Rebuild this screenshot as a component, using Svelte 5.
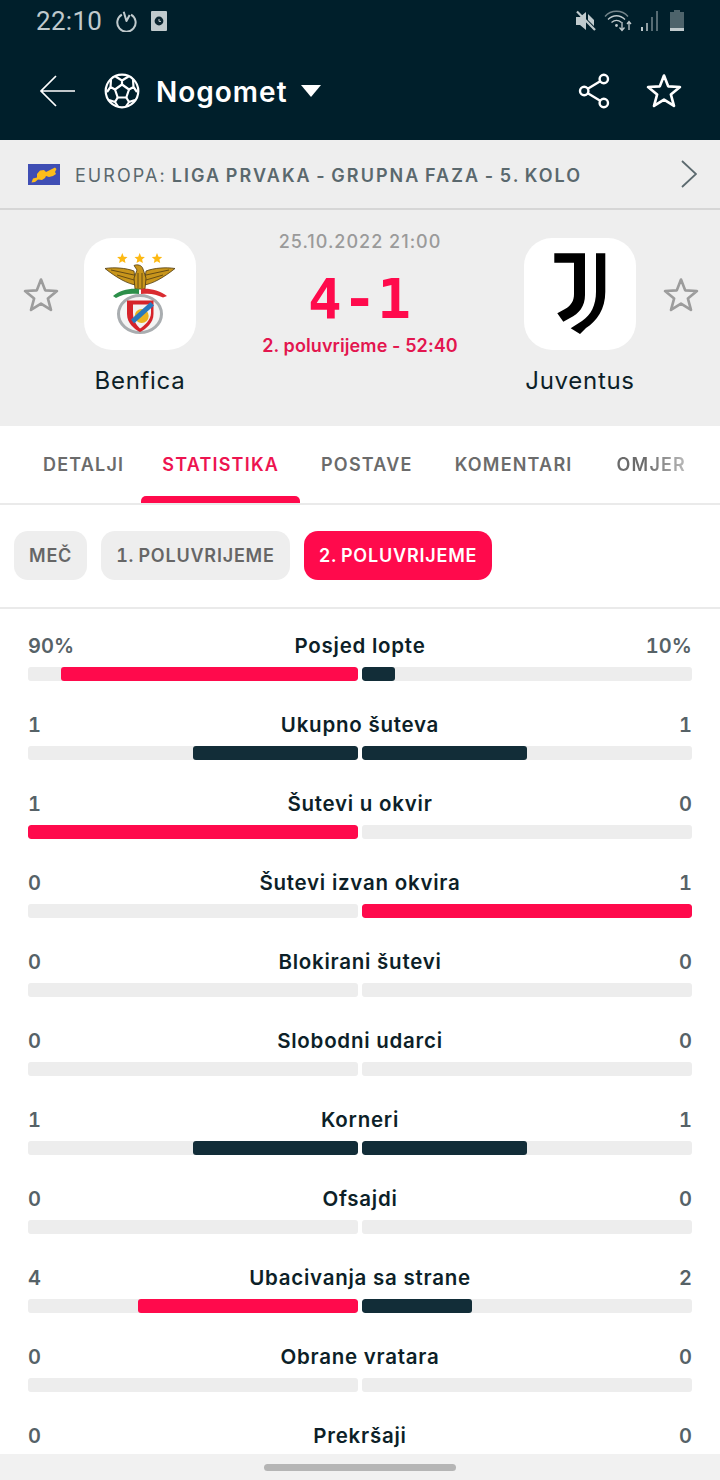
<script>
  const tabs = ['DETALJI', 'STATISTIKA', 'POSTAVE', 'KOMENTARI', 'OMJER'];
  const chips = ['MEČ', '1. POLUVRIJEME', '2. POLUVRIJEME'];
  const stats = [
    { name: 'Posjed lopte', l: 90, r: 10, suffix: '%' },
    { name: 'Ukupno šuteva', l: 1, r: 1 },
    { name: 'Šutevi u okvir', l: 1, r: 0 },
    { name: 'Šutevi izvan okvira', l: 0, r: 1 },
    { name: 'Blokirani šutevi', l: 0, r: 0 },
    { name: 'Slobodni udarci', l: 0, r: 0 },
    { name: 'Korneri', l: 1, r: 1 },
    { name: 'Ofsajdi', l: 0, r: 0 },
    { name: 'Ubacivanja sa strane', l: 4, r: 2 },
    { name: 'Obrane vratara', l: 0, r: 0 },
    { name: 'Prekršaji', l: 0, r: 0 }
  ];
  const pct = (v, o) => (v + o === 0 ? 0 : (v / (v + o)) * 100);
  const tone = (v, o) => (v > o ? 'hot' : 'cool');
  const starPath = 'M17.5 2.5 21.6 13 33 13.6 24.2 20.9 27.2 32 17.5 25.8 7.8 32 10.8 20.9 2 13.6 13.4 13Z';
  const miniStar = 'M0-5.4 1.5-1.8 5.2-1.5 2.4 1 3.2 4.6 0 2.700-3.2 4.6-2.4 1-5.2-1.5-1.500-1.8Z';
</script>

<div class="page">
  <header class="top">
    <div class="status">
      <div class="status-left">
        <span class="clock">22:10</span>
        <svg class="si" width="22" height="22" viewBox="0 0 24 24" fill="none" stroke="#c0cacd" stroke-width="2.200"><path d="M7.5 5a10 10 0 1 0 10 0"/><path d="M9.500 2 12.500 12 16 5.500" stroke-linejoin="round"/></svg>
        <svg class="si" width="18" height="22" viewBox="0 0 18 22"><rect x="1" y="1" width="16" height="20" rx="1" fill="#c0cacd"/><circle cx="9" cy="11" r="4.400" fill="#0b2530"/><path d="M9 9v2.400h2" stroke="#c0cacd" stroke-width="1" fill="none"/></svg>
      </div>
      <div class="status-right">
        <svg width="21" height="22" viewBox="0 0 21 22"><path d="M1 7h4l6-5v7.500ZM1 7v8h4l6 5V9.500Z" fill="#c0cacd"/><path d="M2 1.500 20 20" stroke="#c0cacd" stroke-width="2.200"/><path d="M13 4 19 10v6l-6-6Z" fill="#c0cacd"/></svg>
        <svg width="28" height="22" viewBox="0 0 28 22" fill="none" stroke="#8f9da2" stroke-width="1.300"><path d="M1 6.500C7-.5 18-.5 24 6.500" stroke="#74858b"/><path d="M4 9.500C9 4.500 16 4.500 21 9.500" stroke="#c0cacd"/><path d="M7.500 12.500c3-2.500 7-2.500 10 0" stroke="#c0cacd"/><circle cx="12.500" cy="15.500" r="1.400" fill="#c0cacd" stroke="none"/><path d="M18 12v8M15.500 17.500 18 20.500l2.500-3" stroke="#c0cacd"/><path d="M25 20v-8M23 14l2-2.500 2 2.500" stroke="#c0cacd"/></svg>
        <svg width="19" height="22" viewBox="0 0 19 22"><rect x="1" y="17" width="2" height="4" fill="#c0cacd"/><rect x="6" y="13" width="2" height="8" fill="#8f9da2"/><rect x="11" y="7" width="2" height="14" fill="#566b73"/><rect x="16" y="1" width="2" height="20" fill="#566b73"/></svg>
        <svg class="batt" width="14" height="22" viewBox="0 0 14 22"><rect x="4" y="0" width="6" height="3" fill="#4d636b"/><rect y="2" width="14" height="16" fill="#4d636b"/><rect y="18" width="14" height="3" fill="#c0cacd"/></svg>
      </div>
    </div>
    <div class="bar">
      <div class="bar-left">
        <svg width="36" height="34" viewBox="0 0 36 34" fill="none" stroke="#fff" stroke-width="1.700"><path d="M36 17H2M17 2 2 17l15 15"/></svg>
        <svg class="ball" width="36" height="36" viewBox="0 0 36 36" fill="none" stroke="#fff" stroke-width="2.200" stroke-linejoin="round"><circle cx="18" cy="18" r="16.300"/><path d="M18 11.500 25 16.500 22.300 24.500H13.700L11 16.500Z"/><path d="M18 11.500V7.500L11.500 3.500M18 7.500 24.500 3.500M25 16.500 29.500 14 33 19M29.500 14 29 6.500M11 16.500 6.500 14 3 19M6.500 14 7 6.500M22.300 24.500 25 29 22 33.500M25 29 31 27M13.700 24.500 11 29 14 33.500M11 29 5 27"/></svg>
        <span class="sport">Nogomet</span>
        <span class="caret"></span>
      </div>
      <div class="bar-right">
        <svg width="32" height="36" viewBox="0 0 32 36" fill="none" stroke="#fff" stroke-width="2.400"><circle cx="6.200" cy="18" r="4.200"/><circle cx="25.800" cy="6" r="4.200"/><circle cx="25.800" cy="30" r="4.200"/><path d="M9.800 15.800 22.200 8.200M9.800 20.200 22.200 27.800"/></svg>
        <svg width="36" height="36" viewBox="0 0 35 35" fill="none" stroke="#fff" stroke-width="2.600" stroke-linejoin="round"><path d={starPath}/></svg>
      </div>
    </div>
  </header>

  <div class="league">
    <svg class="flag" width="32" height="21" viewBox="0 0 32 21"><rect width="32" height="21" fill="#3f4eb4"/><path d="M3.500 18.500 5 14.500 9 13.500 9 10 12 6.500 16 6 18 8 22 6 27 3.500 28.500 5 27 8 28 10 25 12 21 13 18 12 17 14 14 16 10 15.500 7 18Z" fill="#fdbd1b"/></svg>
    <span class="league-text">EUROPA: <b>LIGA PRVAKA - GRUPNA FAZA - 5. KOLO</b></span>
    <svg class="chev" width="16" height="28" viewBox="0 0 16 28" fill="none" stroke="#5c6a6f" stroke-width="1.800"><path d="M1 1l14 13L1 27"/></svg>
  </div>

  <section class="match">
    <svg class="mstar" width="36" height="36" viewBox="0 0 35 35" fill="none" stroke="#9c9c9c" stroke-width="2.600" stroke-linejoin="round"><path d={starPath}/></svg>
    <div class="team">
      <div class="logo">
        <svg width="112" height="112" viewBox="0 0 112 112">
          <g fill="#fdb913">
            <path d={miniStar} transform="translate(38.300 20.500)"/>
            <path d={miniStar} transform="translate(55.700 20.500)"/>
            <path d={miniStar} transform="translate(73 20.500)"/>
          </g>
          <g stroke="#4e3a12" stroke-width=".8" fill="#c8951b">
            <path d="M21 30.500C30 29 42 30 50 33L52 47C44 46 33 40 21 30.500Z"/>
            <path d="M91 30.500C82 29 70 30 62 33L60 47C68 46 79 40 91 30.500Z"/>
            <path d="M50 27.500C53 26 58 27 59 31L62 40 61 51H51L50 40 53 32Z"/>
            <path d="M27 32 50 37M33 37 50 42M85 32 62 37M79 37 62 42M54 35V50M58 35V50" fill="none"/>
          </g>
          <path d="M29 58C36 52 46 50 55 51V56C46 55 38 56 32 60Z" fill="#2c8f4a"/>
          <path d="M57 51C65 50 75 52 83 58L79 59.500C72 56 66 55 57 56Z" fill="#d92b30"/>
          <ellipse cx="56" cy="76" rx="21.500" ry="18.500" fill="#f4f4f4" stroke="#a9adb0" stroke-width="3"/>
          <path d="M43 62.500H69.500V76C69.500 85 62 91 56 94 50 91 43 85 43 76Z" fill="#d5232a"/>
          <path d="M49 66.500H67V75C67 82 60 88 56 90.500 52 87 49 81 49 75Z" fill="#f2f2f2"/>
          <circle cx="57.700" cy="78" r="7" fill="#eab320"/>
          <path d="M47 81.500 66.500 64 70 67.500 50 85.500Z" fill="#2878bd"/>
        </svg>
      </div>
      <span class="tname">Benfica</span>
    </div>
    <div class="center">
      <span class="date">25.10.2022 21:00</span>
      <span class="score">4-1</span>
      <span class="time">2. poluvrijeme - 52:40</span>
    </div>
    <div class="team right">
      <div class="logo">
        <svg width="112" height="112" viewBox="0 0 112 112" fill="#000">
          <path d="M30.300 15.300H61V57C61 68 55 76 46 80L39.300 83.700 33.300 75.300 41 71C47 67.500 50 63 50 56V24.700H30.300Z"/>
          <path d="M72 15.300H81.300V53.700C81.300 71 73 83 62 90L56 96 46.700 90.300 58 83C67 77 72 67 72 53.700Z"/>
        </svg>
      </div>
      <span class="tname">Juventus</span>
    </div>
    <svg class="mstar" width="36" height="36" viewBox="0 0 35 35" fill="none" stroke="#9c9c9c" stroke-width="2.600" stroke-linejoin="round"><path d={starPath}/></svg>
  </section>

  <nav class="tabs">
    {#each tabs as t, i}
      <div class="tab" class:active={i === 1} class:fade={i === 4}>{t}</div>
    {/each}
  </nav>

  <div class="chips">
    {#each chips as c, i}
      <div class="chip" class:on={i === 2}>{c}</div>
    {/each}
  </div>

  <div class="stats">
    {#each stats as s}
      <div class="stat">
        <div class="labels">
          <span class="val">{s.l}{s.suffix ?? ''}</span>
          <span class="name">{s.name}</span>
          <span class="val">{s.r}{s.suffix ?? ''}</span>
        </div>
        <div class="bars">
          <div class="track left"><div class="fill {tone(s.l, s.r)}" style="width:{pct(s.l, s.r)}%"></div></div>
          <div class="track"><div class="fill {tone(s.r, s.l)}" style="width:{pct(s.r, s.l)}%"></div></div>
        </div>
      </div>
    {/each}
  </div>

  <div class="gesture"><span></span></div>
</div>

<style>
  :global(body) { margin: 0; background: #fff; }
  .page {
    position: relative;
    width: 720px;
    height: 1480px;
    overflow: hidden;
    font-family: Inter, "Noto Sans", sans-serif;
    color: #0d1f28;
    background: #fff;
  }
  .top { height: 140px; background: #001f2b; box-sizing: border-box; }
  .status { height: 46px; display: flex; justify-content: space-between; align-items: center; padding: 0 36px 4px 36px; box-sizing: border-box; }
  .status-left { display: flex; align-items: center; gap: 13px; }
  .clock { font-family: Roboto, sans-serif; font-size: 26px; color: #c0cacd; letter-spacing: .3px; }
  .status-right { display: flex; align-items: center; gap: 8px; }
  .batt { margin-left: 3px; }
  .bar { display: flex; justify-content: space-between; align-items: center; height: 90px; padding: 0 38px 0 39px; }
  .bar-left { display: flex; align-items: center; }
  .ball { margin-left: 29px; }
  .sport { margin-left: 16px; font-size: 28px; font-weight: 600; color: #fff; letter-spacing: 1px; position: relative; top: 1px; }
  .caret { margin-left: 13px; width: 0; height: 0; border-left: 10.500px solid transparent; border-right: 10.500px solid transparent; border-top: 12px solid #fff; }
  .bar-right { display: flex; align-items: center; gap: 36px; }

  .league { height: 70px; box-sizing: border-box; background: #eee; border-bottom: 2px solid #d6d6d6; display: flex; align-items: center; padding: 0 23px 0 28px; }
  .league-text { margin: 2px 0 0 15px; font-size: 18px; color: #5a686d; letter-spacing: 2.050px; word-spacing: -2px; flex: 1; }
  .league-text b { font-weight: 600; }

  .match { height: 216px; background: #eee; display: flex; align-items: flex-start; padding: 28px 21px 0 23px; box-sizing: border-box; }
  .mstar { margin-top: 39px; flex: none; }
  .team { width: 112px; flex: none; display: flex; flex-direction: column; align-items: center; margin: 0 25px; }
  .team.right { margin-right: 27px; }
  .logo { width: 112px; height: 112px; background: #fff; border-radius: 28px; }
  .logo svg { display: block; }
  .tname { margin-top: 16px; font-size: 24px; letter-spacing: .7px; color: #0d1f28; white-space: nowrap; }
  .center { flex: 1; display: flex; flex-direction: column; align-items: center; margin-top: -8px; }
  .date { font-size: 18px; font-weight: 500; color: #9a9a9a; letter-spacing: 1px; line-height: 24px; }
  .score { font-family: "DejaVu Sans Mono", monospace; font-weight: 700; font-size: 56px; line-height: 60px; color: #ff0a4c; margin-top: 15px; letter-spacing: 1px; }
  .time { font-size: 18px; font-weight: 600; color: #e3164f; line-height: 24px; margin-top: 5px; letter-spacing: .1px; }

  .tabs { height: 79px; box-sizing: border-box; border-bottom: 2px solid #eaeaea; display: flex; padding-left: 22px; overflow: hidden; }
  .tab { position: relative; font-size: 18px; font-weight: 600; color: #6b6b6b; letter-spacing: 1.200px; padding: 28px 21px 0; white-space: nowrap; }
  .tab:first-child { padding-right: 17px; }
  .tab.active { color: #ed1450; }
  .tab.active::after { content: ''; position: absolute; left: 0; right: 0; bottom: 0; height: 7px; background: #ff0a4c; border-radius: 5px 5px 0 0; }
  .tab.fade { margin-left: 2px; background: linear-gradient(90deg, #6b6b6b 45%, #c4c4c4 85%); -webkit-background-clip: text; background-clip: text; color: transparent; }

  .chips { display: flex; gap: 14px; padding: 26px 14px; border-bottom: 2px solid #eaeaea; height: 104px; box-sizing: border-box; }
  .chip { height: 49px; line-height: 49px; padding: 0 15px; border-radius: 14px; background: #eee; color: #666; font-size: 18px; font-weight: 600; letter-spacing: .8px; word-spacing: -1.500px; font-variant-numeric: tabular-nums; }
  .chip.on { background: #ff0a4c; color: #fff; }

  .stats { padding: 20px 28px 0; }
  .stat { height: 79px; box-sizing: border-box; }
  .labels { display: flex; justify-content: space-between; align-items: center; height: 34px; position: relative; }
  .val { font-size: 20px; font-weight: 600; color: #566267; letter-spacing: .1px; font-variant-numeric: tabular-nums; }
  .name { position: absolute; left: 0; right: 0; top: 4px; text-align: center; font-size: 20.500px; font-weight: 600; color: #0d1f28; letter-spacing: .75px; }
  .bars { display: flex; gap: 4px; margin-top: 4px; }
  .track { flex: 1; height: 14px; background: #ededed; border-radius: 3px; overflow: hidden; }
  .track.left { display: flex; justify-content: flex-end; }
  .fill { height: 100%; border-radius: 3px; }
  .fill.hot { background: #ff0a4c; }
  .fill.cool { background: #122d38; }

  .gesture { position: absolute; left: 0; right: 0; bottom: 0; height: 26px; background: #f1f1f1; display: flex; justify-content: center; align-items: center; }
  .gesture span { width: 192px; height: 7px; border-radius: 4px; background: #b5b5b5; }
</style>
